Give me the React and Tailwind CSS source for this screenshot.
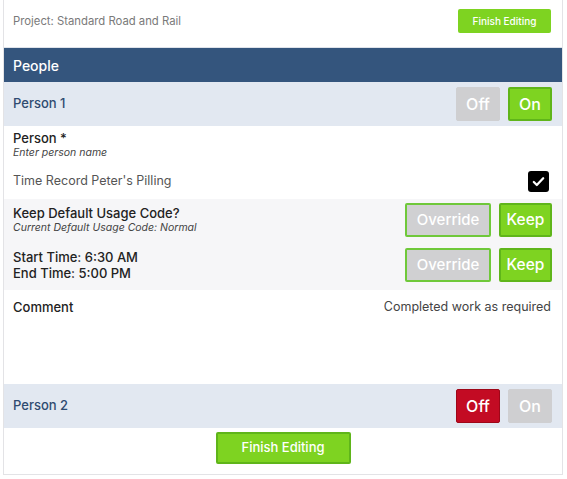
import React from 'react';

function Toggle({ active, onColor, label }) {
    const styles = {
        green: 'bg-[#7ed321] border-[#5fb51a] border-2',
        red: 'bg-[#c30b23] border-[#9e0718] border',
        gray: 'bg-[#cfcfd1] border-[#cfcfd1] border',
    };
    return (
        <button className={`w-[44px] h-[34px] rounded-[2px] text-white text-[16px] font-medium ${styles[active ? onColor : 'gray']}`}>
            {label}
        </button>
    );
}

function PersonHeader({ name, children }) {
    return (
        <div className="h-[44px] bg-[#e2e8f1] flex items-center justify-between pl-[9px] pr-[10px]">
            <span className="text-[13px] font-medium text-[#2f4b70]">{name}</span>
            <div className="flex gap-[8px]">{children}</div>
        </div>
    );
}

function ChoiceButtons() {
    return (
        <div className="flex gap-[8px]">
            <button className="w-[86px] h-[34px] bg-[#d0d0d2] border-2 border-[#6fc83a] rounded-[2px] text-white text-[15px] font-medium">
                Override
            </button>
            <button className="w-[53px] h-[34px] bg-[#7ed321] border-2 border-[#5fb51a] rounded-[2px] text-white text-[15.5px] font-medium">
                Keep
            </button>
        </div>
    );
}

export default function App() {
    return (
        <div className="w-[567px] h-[479px] bg-white" style={{ fontFamily: 'Inter, "Liberation Sans", sans-serif' }}>
            <div className="ml-[3px] w-[560px] h-[475px] border-x border-b border-[#e3e3e6] flex flex-col">
                <div className="h-[48px] flex items-start justify-between pl-[9px] pr-[11px] pt-[9px] border-b border-[#dfe3ea]">
                    <span className="text-[11.3px] leading-[24px] text-[#7a7a7a]">Project: Standard Road and Rail</span>
                    <button className="w-[93px] h-[24px] bg-[#7ed321] rounded-[2px] text-white text-[10px] font-medium">
                        Finish Editing
                    </button>
                </div>

                <div className="h-[34px] bg-[#34557d] flex items-center pl-[9px]">
                    <span className="text-[14px] font-medium text-white">People</span>
                </div>

                <PersonHeader name="Person 1">
                    <Toggle active={false} label="Off" />
                    <Toggle active onColor="green" label="On" />
                </PersonHeader>

                <div className="h-[73px] flex flex-col pl-[9px] pr-[13px]">
                    <div className="pt-[4px]">
                        <div className="text-[13px] leading-[16px] font-medium text-[#222]">Person *</div>
                        <div className="text-[10.5px] leading-[14px] italic text-[#444]">Enter person name</div>
                    </div>
                    <div className="flex items-center justify-between mt-[11px]">
                        <span className="text-[12.5px] text-[#555]">Time Record Peter's Pilling</span>
                        <div className="w-[21px] h-[21px] bg-black rounded-[3px] flex items-center justify-center">
                            <svg width="15" height="15" viewBox="0 0 16 16" fill="none" stroke="white" strokeWidth="2.4" strokeLinecap="round" strokeLinejoin="round">
                                <path d="M3 8.5l3.2 3.2L13 4.5" />
                            </svg>
                        </div>
                    </div>
                </div>

                <div className="h-[91px] bg-[#f6f6f8] flex flex-col gap-[11px] pt-[4px] pl-[9px] pr-[10px]">
                    <div className="flex items-center justify-between">
                        <div>
                            <div className="text-[13px] leading-[16px] font-medium text-[#222]">Keep Default Usage Code?</div>
                            <div className="text-[10.5px] leading-[14px] italic text-[#444]">Current Default Usage Code: Normal</div>
                        </div>
                        <ChoiceButtons />
                    </div>
                    <div className="flex items-center justify-between">
                        <div className="text-[13px] font-medium text-[#222] leading-[16px]">
                            <div>Start Time: 6:30 AM</div>
                            <div>End Time: 5:00 PM</div>
                        </div>
                        <ChoiceButtons />
                    </div>
                </div>

                <div className="h-[94px] pl-[9px] pr-[11px] pt-[8px]">
                    <div className="flex justify-between">
                        <span className="text-[13px] font-medium text-[#222]">Comment</span>
                        <span className="text-[12.5px] text-[#444]">Completed work as required</span>
                    </div>
                </div>

                <PersonHeader name="Person 2">
                    <Toggle active onColor="red" label="Off" />
                    <Toggle active={false} label="On" />
                </PersonHeader>

                <div className="flex-1 flex justify-center pt-[4px]">
                    <button className="w-[135px] h-[32px] bg-[#7ed321] border-2 border-[#5fb51a] rounded-[2px] text-white text-[13px] font-medium">
                        Finish Editing
                    </button>
                </div>
            </div>
        </div>
    );
}
